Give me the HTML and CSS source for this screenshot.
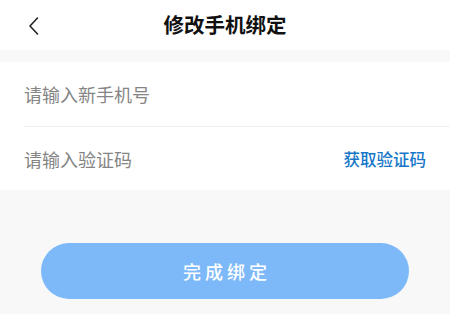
FILE: index.html
```html
<!DOCTYPE html>
<html lang="zh-CN">

<head>
    <meta charset="UTF-8">
    <meta name="viewport" content="width=device-width, initial-scale=1.0">
    <title>修改手机绑定</title>
    <link rel="stylesheet" href="styles.css">
</head>

<body>
    <header class="nav-bar">
        <button class="back-button" aria-label="返回">
            <svg width="12" height="20" viewBox="0 0 12 20">
                <path d="M9.5 2 L2 10 L9.5 18" fill="none" stroke="#222" stroke-width="1.6" stroke-linecap="round" stroke-linejoin="round" />
            </svg>
        </button>
        <h1 class="nav-title">修改手机绑定</h1>
    </header>

    <form class="bind-form">
        <div class="form-group">
            <div class="form-row">
                <input type="tel" class="form-input" placeholder="请输入新手机号">
            </div>
            <div class="form-row">
                <input type="text" class="form-input" placeholder="请输入验证码">
                <button type="button" class="code-button">获取验证码</button>
            </div>
        </div>

        <div class="submit-wrapper">
            <button type="submit" class="submit-button">完成绑定</button>
        </div>
    </form>
</body>

</html>
```

FILE: styles.css
```css
:root {
    --primary-color: #1677c9;
    --button-color: #7db9f8;
    --background-color: #f8f8f8;
    --text-color: #111111;
    --placeholder-color: #858585;
    --card-color: #ffffff;
    --divider-color: #f0f0f0;
}

* {
    margin: 0;
    padding: 0;
    box-sizing: border-box;
}

body {
    font-family: "Noto Sans CJK SC", "Noto Sans", sans-serif;
    background-color: var(--background-color);
    color: var(--text-color);
    min-height: 100vh;
}

.nav-bar {
    position: relative;
    height: 50px;
    background-color: var(--card-color);
    display: flex;
    align-items: center;
    justify-content: center;
}

.back-button {
    position: absolute;
    left: 27px;
    top: 15px;
    width: 14px;
    height: 22px;
    border: none;
    background: none;
    display: flex;
    align-items: center;
    justify-content: center;
}

.nav-title {
    font-size: 20.5px;
    font-weight: 700;
    line-height: 1;
    margin-top: -1px;
}

.bind-form {
    padding-top: 12px;
}

.form-group {
    background-color: var(--card-color);
}

.form-row {
    height: 64px;
    margin-left: 24px;
    padding-right: 24px;
    display: flex;
    align-items: center;
}

.form-row + .form-row {
    border-top: 1px solid var(--divider-color);
}

.form-input {
    flex: 1;
    border: none;
    outline: none;
    background: none;
    font-family: inherit;
    font-size: 18px;
    color: var(--text-color);
}

.form-input::placeholder {
    color: var(--placeholder-color);
}

.code-button {
    border: none;
    background: none;
    font-family: inherit;
    font-size: 16.5px;
    font-weight: 500;
    color: var(--primary-color);
}

.submit-wrapper {
    padding: 53px 41px 0;
}

.submit-button {
    width: 100%;
    height: 56px;
    border: none;
    border-radius: 28px;
    background-color: var(--button-color);
    color: #ffffff;
    font-family: inherit;
    font-size: 18px;
    font-weight: 500;
    letter-spacing: 4px;
    text-indent: 4px;
}
```
